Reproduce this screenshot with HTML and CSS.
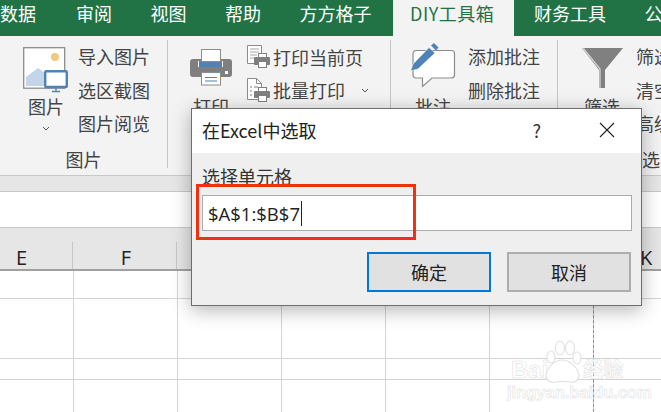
FILE: index.html
```html
<!DOCTYPE html>
<html lang="zh">
<head>
<meta charset="utf-8">
<title>在Excel中选取</title>
<link rel="stylesheet" href="styles.css">
</head>
<body>
<div class="window">
  <nav class="tabs">
    <span class="tab">数据</span><span class="tab">审阅</span><span class="tab">视图</span><span class="tab">帮助</span><span class="tab">方方格子</span><span class="tab active">DIY工具箱</span><span class="tab">财务工具</span><span class="tab">公式向导</span>
  </nav>
  <section class="ribbon">
    <div class="group g1">
      <div class="controls">
        <div class="large">
          <svg class="big-icon" width="46" height="50" viewBox="0 0 46 50"><rect x="0.7" y="7.700" width="41" height="40.500" fill="#fff" stroke="#8c8c8c" stroke-width="1.300"/><circle cx="32" cy="17" r="4" fill="#f0c87e"/><path d="M3 46V37L15 28L22 33V46Z" fill="#c3d5e8"/><rect x="22.200" y="31.200" width="21.600" height="15.800" rx="1" fill="#fff" stroke="#4f83b8" stroke-width="2.400"/><path d="M33 48v3M29 51.500h8" stroke="#4f83b8" stroke-width="1.300"/></svg>
          <span class="large-label">图片</span>
          <svg class="chev" width="8" height="5" viewBox="0 0 8 5"><path d="M1 1l3 3 3-3" fill="none" stroke="#555"/></svg>
        </div>
        <ul class="list">
          <li>导入图片</li><li>选区截图</li><li>图片阅览</li>
        </ul>
      </div>
      <div class="group-label">图片</div>
    </div>
    <div class="group g2">
      <div class="controls">
        <div class="large">
          <svg class="big-icon" width="44" height="50" viewBox="0 0 44 50"><rect x="1" y="19" width="42" height="18" rx="3" fill="#7f7f7f"/><rect x="9" y="21" width="25" height="6" fill="#fff"/><rect x="10" y="21" width="23" height="6" fill="#4f83b8"/><rect x="12.500" y="9.500" width="19" height="12" fill="#fff" stroke="#8c8c8c"/><rect x="12.500" y="32.500" width="19" height="12.500" fill="#fff" stroke="#8c8c8c"/><path d="M16 37.500h12M16 41h12" stroke="#4f83b8"/><rect x="36" y="31" width="3" height="3" fill="#fff"/></svg>
          <span class="large-label">打印</span>
        </div>
        <ul class="list">
          <li class="with-icon"><svg width="23" height="24" viewBox="0 0 23 24"><path d="M.5.500H14.500V18.500H.5Z" fill="#fff" stroke="#8c8c8c"/><path d="M3 4h9M3 7h9M3 10h7M3 13h4" stroke="#a8a8a8"/><rect x="7" y="12" width="16" height="8" rx="1" fill="#7f7f7f"/><rect x="11.500" y="8.500" width="8" height="4" fill="#fff" stroke="#7f7f7f"/><rect x="11.500" y="16.500" width="8" height="6" fill="#fff" stroke="#7f7f7f"/></svg>打印当前页</li>
          <li class="with-icon"><svg width="23" height="24" viewBox="0 0 23 24"><path d="M.5.500H9.500L14.500 5.500V21.500H.5Z" fill="#fff" stroke="#8c8c8c"/><path d="M9.500.500V5.500H14.500" fill="none" stroke="#8c8c8c"/><path d="M3 9h2M7 9h4M3 13h2M3 17h2" stroke="#7f7f7f"/><rect x="7" y="13" width="16" height="7" rx="1" fill="#7f7f7f"/><rect x="11.500" y="9.500" width="8" height="4" fill="#fff" stroke="#7f7f7f"/><rect x="11.500" y="17.500" width="8" height="6" fill="#fff" stroke="#7f7f7f"/></svg>批量打印<svg class="chev-inline" width="8" height="5" viewBox="0 0 8 5"><path d="M1 1l3 3 3-3" fill="none" stroke="#555"/></svg></li>
        </ul>
      </div>
    </div>
    <div class="group g3">
      <div class="controls">
        <div class="large">
          <svg class="big-icon" width="46" height="50" viewBox="0 0 46 50"><path d="M6 10.500H41.500a3 3 0 0 1 3 3V35a3 3 0 0 1-3 3H22L12.500 46.500V38H6a3 3 0 0 1-3-3V13.500a3 3 0 0 1 3-3Z" fill="#fff" stroke="#8c8c8c" stroke-width="1.200"/><path d="M.5 31L3 24L19 7.500L25 13L8 29Z" fill="#4f83b8" stroke="#fff" stroke-width=".6"/><path d="M21 5.500L24 3L28.500 7.500L26 10.500Z" fill="#4f83b8"/></svg>
          <span class="large-label">批注</span>
        </div>
        <ul class="list">
          <li>添加批注</li><li>删除批注</li>
        </ul>
      </div>
    </div>
    <div class="group g4">
      <div class="controls">
        <div class="large">
          <svg class="big-icon" width="44" height="50" viewBox="0 0 44 50"><path d="M2 8H43L25 30V48H19V30Z" fill="#808080"/><path d="M3 8L20 29V48" fill="none" stroke="#cfcfcf" stroke-width="1.400"/></svg>
          <span class="large-label">筛选</span>
        </div>
        <ul class="list">
          <li>筛选</li><li>清空</li><li>高级</li>
        </ul>
      </div>
      <div class="group-label tail">筛选</div>
    </div>
  </section>
  <div class="band"></div>
  <div class="formula"></div>
  <div class="sheet">
    <div class="headers">
      <span class="col">E</span><span class="col">F</span><span class="col"></span><span class="col"></span><span class="col"></span><span class="col"></span><span class="col">K</span>
    </div>
    <div class="row r1"></div>
    <div class="row r2"></div>
    <div class="row r3"></div>
    <div class="row r4"></div>
    <i class="page-break"></i>
    <div class="mark">
      <div class="mark-top"><span class="mark-bai">Bai</span><svg class="paw" width="40" height="44" viewBox="0 0 40 44"><g fill="#fff" stroke="#e2e2e2" stroke-width="1.200"><ellipse cx="9" cy="17" rx="4" ry="6"/><ellipse cx="18" cy="8" rx="4.500" ry="7"/><ellipse cx="28" cy="8" rx="4.500" ry="7"/><ellipse cx="35" cy="18" rx="4" ry="6"/><path d="M20 20c8 0 16 8 17 15 0 6-5 8-9 7-5-1-9-1-14 0-5 1-10-1-10-7 1-7 8-15 16-15Z"/></g></svg><span class="mark-jy">经验</span></div>
      <div class="mark-url">jingyan.baidu.com</div>
    </div>
  </div>
  <div class="dialog">
    <header class="dialog-title">
      <span class="title-text">在Excel中选取</span>
      <span class="help">?</span>
      <svg class="close" width="16" height="16" viewBox="0 0 16 16"><path d="M1 1L15 15M15 1L1 15" stroke="#222" stroke-width="1.100"/></svg>
    </header>
    <div class="dialog-body">
      <label class="field-label">选择单元格</label>
      <div class="input"><span>$A$1:$B$7</span><i class="caret"></i></div>
      <div class="actions">
        <button class="btn primary">确定</button>
        <button class="btn">取消</button>
      </div>
    </div>
    <div class="highlight"></div>
  </div>
</div>
</body>
</html>
```
FILE: styles.css
```css
* { box-sizing: border-box; }
html, body { margin: 0; padding: 0; }
body { width: 661px; height: 412px; overflow: hidden; background: #fff; font-family: "Noto Sans CJK SC", "Noto Sans", sans-serif; color: #444; }
.window { position: relative; width: 661px; height: 412px; overflow: hidden; display: flex; flex-direction: column; }
.tabs { flex: none; height: 36px; background: #217346; display: flex; color: #fff; font-size: 18px; line-height: 26px; white-space: nowrap; }
.tab { flex: none; padding: 0 19.250px; }
.tab:first-child { padding: 0 20.750px 0 0; }
.tab.active { background: #f3f3f3; color: #217346; width: 121px; padding: 0 0 0 17px; margin: 0 .750px 0 2.250px; letter-spacing: .5px; }
.ribbon { flex: none; height: 140px; background: #f3f3f3; border-bottom: 1px solid #c9c9c9; display: flex; padding-top: 4px; }
.group { flex: none; height: 128px; border-right: 1px solid #c6c6c6; display: flex; flex-direction: column; }
.g1 { width: 168px; padding-left: 23px; }
.g2 { width: 223px; padding-left: 21px; }
.g3 { width: 167px; padding-left: 19px; }
.g4 { width: 103px; padding-left: 22px; border-right: 0; }
.controls { height: 115px; display: flex; }
.large { flex: none; display: flex; flex-direction: column; align-items: center; width: 46px; }
.g2 .large, .g4 .large { width: 44px; }
.big-icon { flex: none; display: block; overflow: visible; }
.large-label { font-size: 18px; line-height: 33px; height: 33px; white-space: nowrap; }
.chev { display: block; margin-top: 3px; }
.list { list-style: none; margin: 0; padding: 0; font-size: 18px; line-height: 32px; white-space: nowrap; }
.list li { height: 33.500px; }
.g1 .list { margin-left: 9px; }
.g2 .list { margin-left: 14px; }
.g3 .list { margin-left: 12px; }
.g4 .list { margin-left: 12px; }
.with-icon { display: flex; align-items: center; }
.with-icon > svg:first-child { margin-right: 3px; flex: none; }
.chev-inline { margin-left: 16px; flex: none; }
.group-label { font-size: 18px; line-height: 18px; text-align: center; }
.g1 .group-label { margin-left: -23px; }
.group-label.tail { margin-left: 44px; text-align: left; white-space: nowrap; }
.band { flex: none; height: 16px; background: #e6e6e6; border-bottom: 1px solid #c8c8c8; }
.formula { flex: none; height: 36px; background: #fff; border-bottom: 1px solid #c8c8c8; }
.sheet { position: relative; flex: 1; min-height: 0; overflow: hidden; }
.headers { height: 43px; background: #e6e6e6; border-bottom: 2px solid #a0a0a0; display: grid; grid-template-columns: 73px repeat(6, 104px); align-items: end; font-size: 20px; color: #222; line-height: 32px; font-family: "Open Sans", "Noto Sans", sans-serif; }
.col { display: block; height: 27px; text-align: center; border-right: 1px solid #c6c6c6; padding-left: 3px; }
.col:first-child { padding: 0 29px 0 0; }
.row { border-bottom: 1px solid #d4d4d4; background-image: linear-gradient(90deg, transparent 73px, #d4d4d4 73px, #d4d4d4 74px, transparent 74px), repeating-linear-gradient(90deg, transparent 0, transparent 103px, #d4d4d4 103px, #d4d4d4 104px); background-size: 100% 100%, 520px 100%; background-position: 0 0, 74px 0; background-repeat: no-repeat, no-repeat; }
.r1 { height: 28px; }
.r2 { height: 60px; }
.r3 { height: 21px; }
.r4 { height: 34px; border-bottom: 0; }
.page-break { position: absolute; left: 593px; top: 43px; bottom: 0; border-left: 1px dashed #8e8e8e; }
.mark { position: absolute; left: 507px; top: 112px; width: 120px; color: #fff; font-family: "Liberation Sans", "Noto Sans CJK SC", sans-serif; font-weight: 700; line-height: 1; -webkit-text-stroke: .6px #e2e2e2; }
.mark-top { display: flex; align-items: flex-end; height: 44px; white-space: nowrap; padding-left: 4px; }
.mark-bai { font-size: 24px; line-height: 20px; margin-bottom: 4px; }
.paw { flex: none; margin-left: -6px; }
.mark-jy { font-size: 20px; line-height: 20px; margin: 0 0 4px 1px; }
.mark-url { font-size: 16.500px; white-space: nowrap; }
.dialog { position: absolute; left: 191px; top: 108px; width: 451px; height: 198px; background: #efefef; border: 1px solid #6e6e6e; box-shadow: 0 4px 18px rgba(0,0,0,.3); display: flex; flex-direction: column; color: #222; }
.dialog-title { flex: none; height: 44px; background: #fff; display: flex; align-items: center; padding: 0 26px 2px 10px; font-size: 18px; }
.title-text { flex: 1; white-space: nowrap; }
.help { font-size: 18px; margin-right: 58px; color: #333; }
.dialog-body { flex: 1; padding: 12px 9px 12px 10px; display: flex; flex-direction: column; }
.field-label { font-size: 18px; line-height: 26px; height: 26px; color: #333; margin-top: -2px; margin-bottom: 6px; }
.input { flex: none; height: 36px; background: #fff; border: 1px solid #ababab; display: flex; align-items: center; padding-left: 5px; font-size: 18.500px; color: #222; font-family: "Open Sans", "Noto Sans", sans-serif; }
.caret { width: 1px; height: 25px; background: #222; margin-left: 1px; }
.actions { display: flex; justify-content: flex-end; gap: 16px; margin-top: 21px; padding-right: 1px; }
.btn { width: 124px; height: 40px; background: #e1e1e1; border: 2px solid #adadad; font: inherit; font-size: 18px; color: #222; padding: 0; border-radius: 0; }
.btn.primary { border-color: #0078d7; }
.highlight { position: absolute; left: 4px; top: 75px; width: 220px; height: 56px; border: 3px solid #f0300f; pointer-events: none; }
```
